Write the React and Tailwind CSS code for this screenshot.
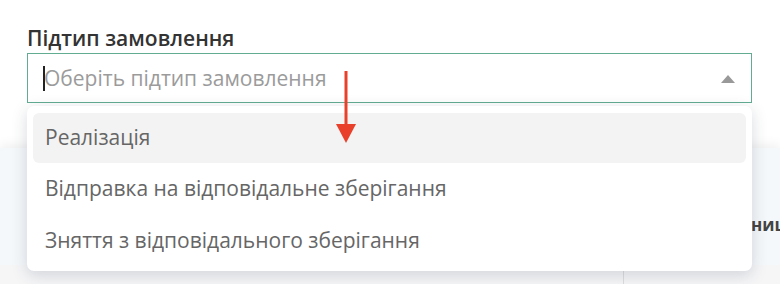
const options = [
  'Реалізація',
  'Відправка на відповідальне зберігання',
  'Зняття з відповідального зберігання',
]

export default function App() {
  return (
    <div className="relative w-[780px] h-[284px] overflow-hidden bg-white font-['Open_Sans',sans-serif]">
      {/* form field */}
      <div className="h-[148px] px-[27px] pt-[26px]">
        <div className="h-[25px] text-[21px] leading-[25px] font-semibold text-[#333]">
          Підтип замовлення
        </div>
        <div className="mt-[2px] h-[50px] w-[725px] border border-[#62ad92] flex items-center pl-[15px] pr-[16px]">
          <span className="w-[2px] h-[25px] bg-[#222]" />
          <span className="flex-1 text-[21px] text-[#9b9b9b] leading-none -ml-[1px]">Оберіть підтип замовлення</span>
          <svg width="14" height="8" viewBox="0 0 14 8" className="mt-[1px]">
            <path d="M0 8 L7 0 L14 8 Z" fill="#999" />
          </svg>
        </div>
      </div>

      {/* content behind the dropdown */}
      <div className="h-[117px] bg-[#f5f8fa] shadow-[0_-4px_10px_rgba(0,0,0,0.06)] flex items-center">
        <span className="mt-[36px] pl-[751px] w-full text-[17px] font-bold text-[#444] whitespace-nowrap">ниця</span>
      </div>
      <div className="h-[19px] bg-[#f6f6f7] flex">
        <div className="w-[624px] border-r border-[#ddd]" />
      </div>

      {/* dropdown */}
      <div className="absolute left-[27px] top-[106px] w-[725px] h-[165px] bg-white rounded-[7px] shadow-[0_4px_16px_rgba(40,50,80,0.18)] px-[6px] pt-[7px]">
        {options.map((o, i) => (
          <div
            key={o}
            className={`${i === 0 ? 'h-[50px] bg-[#f3f3f3] rounded-[6px]' : 'h-[52px]'} flex items-center pl-[12px] text-[21px] text-[#666]`}
          >
            {o}
          </div>
        ))}
      </div>

      {/* annotation arrow */}
      <svg className="absolute left-[335px] top-[71px]" width="22" height="73" viewBox="0 0 22 73">
        <rect x="9.5" y="0" width="3" height="56" fill="#e8402a" />
        <path d="M1 53 L21 53 L11 72 Z" fill="#e8402a" />
      </svg>
    </div>
  )
}
